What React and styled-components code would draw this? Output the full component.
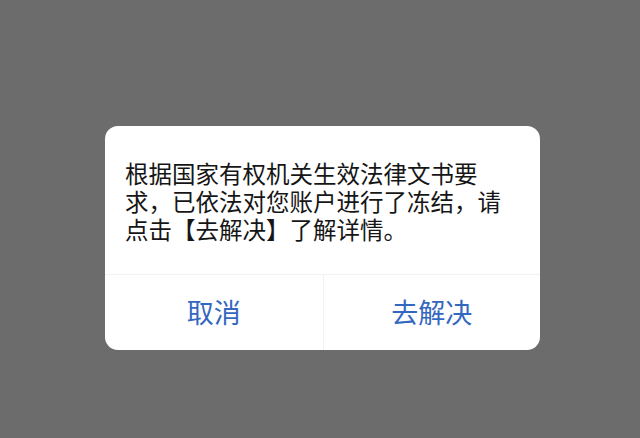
import React from "react";
import styled, { createGlobalStyle } from "styled-components";

const GlobalStyle = createGlobalStyle`
  html, body {
    margin: 0;
    padding: 0;
    background: #6c6c6c;
  }
  body {
    font-family: "Noto Sans CJK SC", "Noto Sans", sans-serif;
  }
`;

const Backdrop = styled.div`
  width: 640px;
  height: 438px;
  background: #6c6c6c;
  display: flex;
  justify-content: center;
  align-items: flex-start;
  padding-top: 126px;
  box-sizing: border-box;
`;

const Dialog = styled.div`
  width: 435px;
  margin-left: 5px;
  background: #ffffff;
  border-radius: 13px;
  overflow: hidden;
  display: flex;
  flex-direction: column;
`;

const Message = styled.p`
  margin: 0;
  padding: 33px 20px 31px 20px;
  font-size: 23.5px;
  line-height: 28px;
  color: #161616;
  letter-spacing: 0;
`;

const Actions = styled.div`
  display: grid;
  grid-template-columns: 1fr 1fr;
  border-top: 1px solid #f1f2f4;
  height: 75px;
`;

const ActionButton = styled.button`
  border: none;
  background: transparent;
  font-family: inherit;
  font-size: 27px;
  color: #3467bf;
  display: flex;
  align-items: center;
  justify-content: center;
  padding: 0 0 2px 0;
  cursor: pointer;
  border-left: ${(p) => (p.$divider ? "1px solid #f1f2f4" : "none")};
`;

const App = () => {
  return (
    <>
      <GlobalStyle />
      <Backdrop>
        <Dialog>
          <Message>
            根据国家有权机关生效法律文书要求，已依法对您账户进行了冻结，请点击【去解决】了解详情。
          </Message>
          <Actions>
            <ActionButton>取消</ActionButton>
            <ActionButton $divider>去解决</ActionButton>
          </Actions>
        </Dialog>
      </Backdrop>
    </>
  );
};

export default App;
